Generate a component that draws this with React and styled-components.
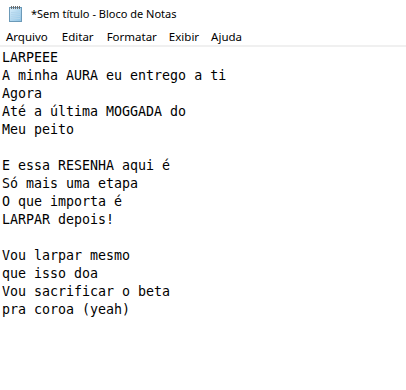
import React from "react"
import styled, { createGlobalStyle } from "styled-components"

const Global = createGlobalStyle`
    html, body {
        margin: 0;
        padding: 0;
        background: #fff;
    }
`;

const Window = styled.div`
    width: 406px;
    height: 390px;
    background: #fff;
    display: flex;
    flex-direction: column;
    overflow: hidden;
`;

const TitleBar = styled.div`
    height: 26px;
    display: flex;
    align-items: center;
    padding-left: 7px;
    gap: 8px;
    font-family: "Noto Sans", "Liberation Sans", sans-serif;
    font-size: 11px;
    color: #000;
`;

const MenuBar = styled.div`
    height: 19px;
    display: flex;
    align-items: flex-start;
    padding-left: 6px;
    font-family: "Noto Sans", "Liberation Sans", sans-serif;
    font-size: 11.5px;
    color: #000;
    border-bottom: 2px solid #f0f0f0;
    overflow: hidden;
`;

const MenuItem = styled.span`
    line-height: 20px;
    margin-top: 1px;
    margin-right: ${({ $gap }) => $gap}px;
`;

const Editor = styled.pre`
    margin: 0;
    padding: 2px 2px 0;
    font-family: "DejaVu Sans Mono", "Liberation Mono", monospace;
    font-size: 13.3px;
    line-height: 18px;
    color: #000;
    white-space: pre;
`;

const NotepadIcon = () => (
    <svg width="16" height="17" viewBox="0 0 16 17">
        <defs>
            <linearGradient id="pg" x1="0" y1="0" x2="1" y2="1">
                <stop offset="0" stopColor="#d8eefb" />
                <stop offset="1" stopColor="#8fc3e4" />
            </linearGradient>
        </defs>
        <rect x="2.5" y="2.5" width="12" height="14" fill="url(#pg)" stroke="#6c9ab8" />
        {[4, 6, 8, 10, 12].map((x) => (
            <rect key={x} x={x} y="1" width="1" height="3" fill="#6b6b6b" />
        ))}
        {[7, 9, 11, 13].map((y) => (
            <line key={y} x1="4" y1={y + 0.5} x2="13" y2={y + 0.5} stroke="#b4d6ec" />
        ))}
    </svg>
);

const menus = [
    ["Arquivo", 14],
    ["Editar", 13],
    ["Formatar", 12],
    ["Exibir", 12],
    ["Ajuda", 0],
];

const lyrics = `LARPEEE
A minha AURA eu entrego a ti
Agora
Até a última MOGGADA do
Meu peito

E essa RESENHA aqui é
Só mais uma etapa
O que importa é
LARPAR depois!

Vou larpar mesmo
que isso doa
Vou sacrificar o beta
pra coroa (yeah)`;

export default function App() {
    return (
        <>
            <Global />
            <Window>
                <TitleBar>
                    <NotepadIcon />
                    <span>*Sem título - Bloco de Notas</span>
                </TitleBar>
                <MenuBar>
                    {menus.map(([label, gap]) => (
                        <MenuItem key={label} $gap={gap}>{label}</MenuItem>
                    ))}
                </MenuBar>
                <Editor>{lyrics}</Editor>
            </Window>
        </>
    );
}
